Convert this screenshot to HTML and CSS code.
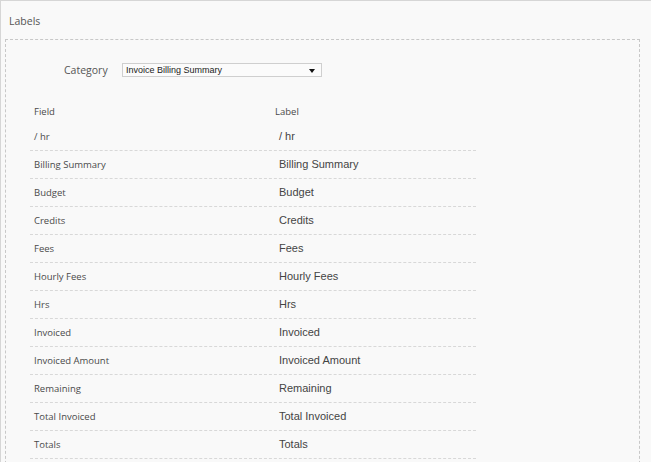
FILE: index.html
```html
<!DOCTYPE html>
<html>
<head>
<meta charset="utf-8">
<link rel="stylesheet" href="styles.css">
</head>
<body>
<div class="panel">
  <div class="title">Labels</div>
  <div class="box">
    <div class="cat-row">
      <span class="cat-label">Category</span>
      <div class="select"><span>Invoice Billing Summary</span><span class="arrow"></span></div>
    </div>
    <div class="table">
      <div class="row head"><div class="f">Field</div><div class="l">Label</div></div>
      <div class="row"><div class="f">/ hr</div><div class="v">/ hr</div></div>
      <div class="row"><div class="f">Billing Summary</div><div class="v">Billing Summary</div></div>
      <div class="row"><div class="f">Budget</div><div class="v">Budget</div></div>
      <div class="row"><div class="f">Credits</div><div class="v">Credits</div></div>
      <div class="row"><div class="f">Fees</div><div class="v">Fees</div></div>
      <div class="row"><div class="f">Hourly Fees</div><div class="v">Hourly Fees</div></div>
      <div class="row"><div class="f">Hrs</div><div class="v">Hrs</div></div>
      <div class="row"><div class="f">Invoiced</div><div class="v">Invoiced</div></div>
      <div class="row"><div class="f">Invoiced Amount</div><div class="v">Invoiced Amount</div></div>
      <div class="row"><div class="f">Remaining</div><div class="v">Remaining</div></div>
      <div class="row"><div class="f">Total Invoiced</div><div class="v">Total Invoiced</div></div>
      <div class="row"><div class="f">Totals</div><div class="v">Totals</div></div>
    </div>
  </div>
</div>
</body>
</html>
```
FILE: styles.css
```css
html, body {
  margin: 0;
  padding: 0;
  background: #f9f9f9;
  overflow: hidden;
}
.panel {
  border-top: 1px solid #d6d6d6;
  border-left: 1px solid #d6d6d6;
  height: 462px;
  box-sizing: border-box;
  overflow: hidden;
  font-family: "Open Sans", sans-serif;
}
.title {
  padding: 13px 0 0 8px;
  height: 38px;
  box-sizing: border-box;
  font-size: 10.5px;
  line-height: 14px;
  color: #555;
}
.box {
  margin-left: 4px;
  width: 635px;
  height: 440px;
  box-sizing: border-box;
  border: 1px dashed #c8c8c8;
  border-bottom: none;
}
.cat-row {
  display: flex;
  align-items: center;
  padding: 23px 0 0 58px;
}
.cat-label {
  width: 58px;
  font-size: 10.5px;
  color: #555;
  line-height: 14px;
}
.select {
  width: 200px;
  height: 14px;
  box-sizing: border-box;
  border: 1px solid #cfcfcf;
  background: #fbfbfb;
  display: flex;
  align-items: center;
  justify-content: space-between;
  padding: 0 6px 0 3px;
  font-family: "Liberation Sans", Arial, sans-serif;
  font-size: 9px;
  color: #222;
}
.arrow {
  width: 0;
  height: 0;
  border-left: 3px solid transparent;
  border-right: 3px solid transparent;
  border-top: 4px solid #111;
  margin-top: 1px;
}
.table {
  margin: 23px 0 0 24px;
  width: 446px;
}
.row {
  display: grid;
  grid-template-columns: 245px 1fr;
  height: 28px;
  align-items: center;
  border-bottom: 1px dashed #d8d8d8;
  box-sizing: border-box;
}
.row.head {
  height: 23px;
  border-bottom: none;
}
.f {
  padding-left: 4px;
  font-size: 9.5px;
  color: #4a4a4a;
}
.l {
  font-size: 9.5px;
  color: #4a4a4a;
}
.v {
  padding-left: 4px;
  padding-bottom: 1px;
  font-family: "Liberation Sans", Arial, sans-serif;
  font-size: 11px;
  color: #444;
}
```
